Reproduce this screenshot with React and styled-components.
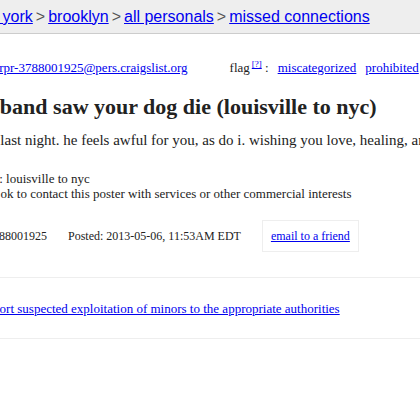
import React from "react";
import styled, { createGlobalStyle } from "styled-components";

const Global = createGlobalStyle`
  html, body { margin: 0; padding: 0; background: #fff; overflow: hidden; }
  body { width: 420px; height: 420px; }
`;

const Page = styled.div`
  margin-left: -68px;
  width: 640px;
  font-family: "Liberation Serif", "Times New Roman", serif;
  color: #222;
  a { color: #00e; text-decoration: underline; }
`;

const Header = styled.header`
  height: 33px;
  background: #eee;
  border-bottom: 1px solid #ccc;
  display: flex;
  align-items: center;
  padding-left: 1px;
  font-family: "Liberation Sans", Arial, sans-serif;
  font-size: 16px;
  white-space: nowrap;
`;

const Sep = styled.span`
  color: #555;
  margin: 0 3px;
`;

const Main = styled.main`
  display: flex;
  flex-direction: column;
`;

const TopRow = styled.div`
  margin-top: 22px;
  display: flex;
  align-items: baseline;
  font-size: 13px;
  line-height: 16px;
  white-space: nowrap;
`;

const Flag = styled.div`
  margin-left: 42px;
  display: flex;
  align-items: baseline;
  gap: 9px;
  sup { font-size: 9px; vertical-align: 5px; margin-left: 2px; }
`;

const Title = styled.h2`
  margin: 18px 0 0;
  font-size: 22px;
  line-height: 26px;
  font-weight: bold;
  white-space: nowrap;
`;

const Body = styled.section`
  margin-top: 11px;
  font-size: 15px;
  line-height: 18px;
  text-indent: -5px;
  white-space: nowrap;
`;

const Blurbs = styled.ul`
  margin: 22px 0 0;
  padding-left: 21px;
  list-style: none;
  font-size: 13px;
  line-height: 15px;
`;

const PostingRow = styled.div`
  margin-top: 19px;
  display: flex;
  align-items: center;
  font-size: 12px;
  white-space: nowrap;
`;

const Info = styled.span`
  margin-right: ${(p) => p.$gap}px;
`;

const ShareBox = styled.div`
  border: 1px solid #eee;
  height: 30px;
  padding: 0 8px;
  display: flex;
  align-items: center;
`;

const Rule = styled.hr`
  border: 0;
  border-top: 1px solid #eee;
  margin: ${(p) => p.$top}px 0 0;
  height: 0;
`;

const Report = styled.p`
  margin: 23px 0 0;
  padding-left: 51px;
  font-size: 13px;
  line-height: 16px;
  white-space: nowrap;
`;

export default function App() {
  return (
    <>
      <Global />
      <Page>
        <Header>
          <a href="#">CL</a>
          <Sep>&gt;</Sep>
          <a href="#">new york</a>
          <Sep>&gt;</Sep>
          <a href="#">brooklyn</a>
          <Sep>&gt;</Sep>
          <a href="#">all personals</a>
          <Sep>&gt;</Sep>
          <a href="#">missed connections</a>
        </Header>
        <Main>
          <TopRow>
            <span>
              Reply to: <a href="#">kwrpr-3788001925@pers.craigslist.org</a>
            </span>
            <Flag>
              <span>
                flag<sup><a href="#">[?]</a></sup> :
              </span>
              <a href="#">miscategorized</a>
              <a href="#">prohibited</a>
              <a href="#">spam</a>
              <a href="#">best of</a>
            </Flag>
          </TopRow>
          <Title>my husband saw your dog die (louisville to nyc)</Title>
          <Body>
            it happened last night. he feels awful for you, as do i. wishing you love, healing, and peace.
          </Body>
          <Blurbs>
            <li>Location: louisville to nyc</li>
            <li>it's NOT ok to contact this poster with services or other commercial interests</li>
          </Blurbs>
          <PostingRow>
            <Info $gap={21}>PostingID: 3788001925</Info>
            <Info $gap={21}>Posted: 2013-05-06, 11:53AM EDT</Info>
            <ShareBox>
              <a href="#">email to a friend</a>
            </ShareBox>
          </PostingRow>
          <Rule $top={25} />
          <Report>
            <a href="#">report suspected exploitation of minors to the appropriate authorities</a>
          </Report>
          <Rule $top={21} />
        </Main>
      </Page>
    </>
  );
}
